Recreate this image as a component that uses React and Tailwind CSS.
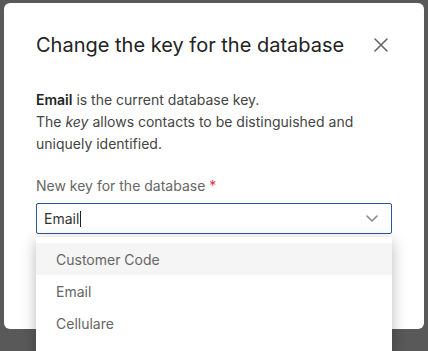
const options = ['Customer Code', 'Email', 'Cellulare'];

const App = () => {
    return (
        <div className="w-[428px] h-[351px] bg-[#595959] overflow-hidden pt-[3px] pl-[4px] font-['Inter',sans-serif]">
            {/* Modal */}
            <div className="w-[420px] h-[326px] bg-white rounded-md px-8 pt-7">
                <div className="flex items-center justify-between">
                    <h2 className="text-[20px] leading-[28px] text-[#222]">Change the key for the database</h2>
                    <button className="w-[14px] h-[14px] mr-1 flex items-center justify-center text-[#666]">
                        <svg width="14" height="14" viewBox="0 0 14 14" fill="none" stroke="currentColor" strokeWidth="1.6" strokeLinecap="round">
                            <path d="M1 1L13 13M13 1L1 13" />
                        </svg>
                    </button>
                </div>

                <p className="mt-[30px] text-[14px] leading-[22px] text-[#444]">
                    <span className="font-semibold text-[#222]">Email</span> is the current database key.
                    <br />
                    The <em>key</em> allows contacts to be distinguished and uniquely identified.
                </p>

                <label className="block mt-[21px] text-[14px] leading-[20px] text-[#666]">
                    New key for the database <span className="text-[#e53935]">*</span>
                </label>

                <div className="relative mt-[7px]">
                    <div className="h-[31px] border border-[#2a55a0] rounded-[2px] flex items-center justify-between pl-[7px] pr-[13px]">
                        <span className="text-[14px] text-[#333] flex items-center">
                            Email<span className="inline-block w-px h-[16px] bg-[#222] ml-px"></span>
                        </span>
                        <svg width="12" height="7" viewBox="0 0 12 7" fill="none" stroke="#8a8a8a" strokeWidth="1.6" strokeLinecap="round" strokeLinejoin="round">
                            <path d="M1 1L6 6L11 1" />
                        </svg>
                    </div>

                    {/* Dropdown menu */}
                    <div className="absolute left-0 right-0 top-[34px] h-[120px] bg-white pt-[6px] shadow-[0_4px_14px_rgba(0,0,0,0.28)]">
                        {options.map((opt, i) => (
                            <div
                                key={opt}
                                className={`h-8 flex items-center pl-5 text-[14px] text-[#666] ${i === 0 ? 'bg-[#f5f5f5]' : ''}`}
                            >
                                {opt}
                            </div>
                        ))}
                    </div>
                </div>
            </div>
        </div>
    );
};

export default App;
